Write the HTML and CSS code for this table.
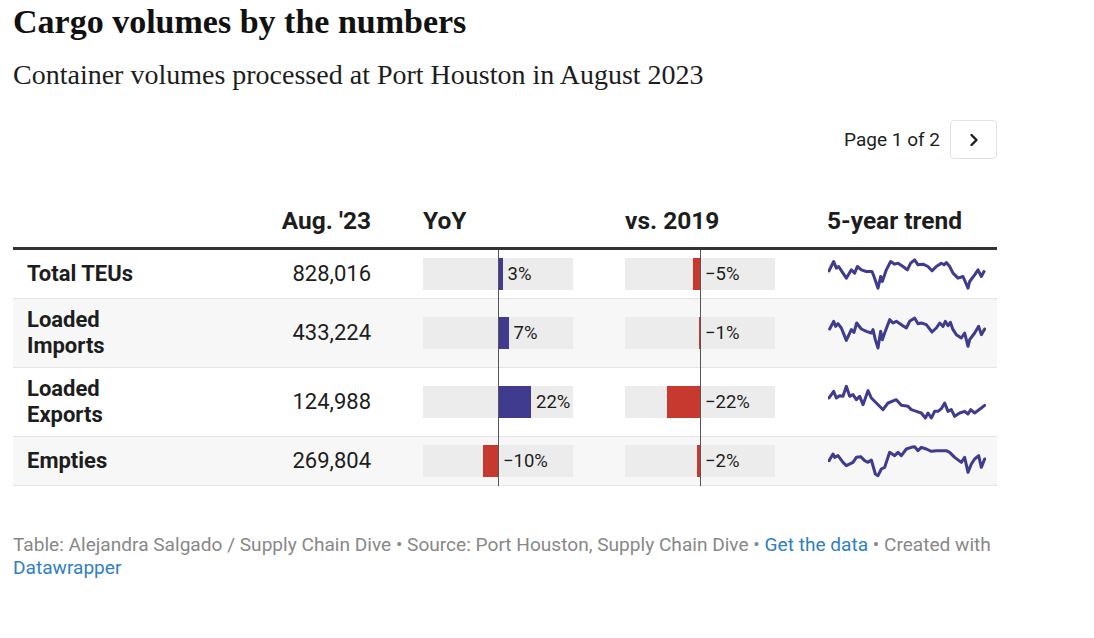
FILE: index.html
```html
<!DOCTYPE html>
<html>
<head>
<meta charset="utf-8">
<link rel="stylesheet" href="styles.css">
</head>
<body>
<div class="chart">
  <h1 class="title">Cargo volumes by the numbers</h1>
  <p class="subtitle">Container volumes processed at Port Houston in August 2023</p>

  <div class="pager">
    <span class="pager-text">Page 1 of 2</span>
    <button class="pager-btn" aria-label="Next page">
      <svg width="14" height="14" viewBox="0 0 14 14"><path d="M4.5 2 L9.5 7 L4.5 12" fill="none" stroke="#1d1d1d" stroke-width="2.4" stroke-linecap="round" stroke-linejoin="round"/></svg>
    </button>
  </div>

  <div class="table">
    <div class="row head">
      <div class="cell"></div>
      <div class="cell num">Aug. '23</div>
      <div class="cell">YoY</div>
      <div class="cell">vs. 2019</div>
      <div class="cell">5-year trend</div>
    </div>

    <div class="row">
      <div class="cell label">Total TEUs</div>
      <div class="cell num">828,016</div>
      <div class="cell barcell"><div class="track"><div class="neg"></div><div class="pos"><div class="bar blue" style="width:4.5px"></div><span class="val">3%</span></div></div></div>
      <div class="cell barcell"><div class="track"><div class="neg"><div class="bar red" style="width:7.5px"></div></div><div class="pos"><span class="val">−5%</span></div></div></div>
      <div class="cell spark">
        <svg width="158" height="40" viewBox="80 187.5 474 120"><polyline vector-effect="non-scaling-stroke" points="83,238 97,210 105,230 112,225 125,245 135,260 150,235 160,245 168,225 180,235 195,240 212,240 218,255 230,290 238,255 243,270 255,235 268,210 280,218 290,215 305,225 318,235 328,215 340,205 350,220 365,218 380,225 392,238 405,225 420,215 428,220 435,213 445,225 455,245 470,260 485,255 500,290 505,270 520,250 530,235 540,255 548,240"/></svg>
      </div>
    </div>

    <div class="row alt">
      <div class="cell label">Loaded Imports</div>
      <div class="cell num">433,224</div>
      <div class="cell barcell"><div class="track"><div class="neg"></div><div class="pos"><div class="bar blue" style="width:10.5px"></div><span class="val">7%</span></div></div></div>
      <div class="cell barcell"><div class="track"><div class="neg"><div class="bar red" style="width:1.5px"></div></div><div class="pos"><span class="val">−1%</span></div></div></div>
      <div class="cell spark">
        <svg width="158" height="40" viewBox="80 40 474 120"><polyline vector-effect="non-scaling-stroke" points="85,88 97,65 103,80 110,72 120,85 135,122 150,90 158,98 166,70 180,88 195,95 210,100 215,90 222,120 230,145 238,95 243,120 250,100 265,60 275,70 285,65 300,75 315,85 325,65 340,55 350,72 360,70 375,75 392,97 405,85 415,70 425,80 432,65 440,78 447,68 455,90 465,105 480,115 490,100 500,140 505,120 520,100 532,80 540,105 550,88"/></svg>
      </div>
    </div>

    <div class="row">
      <div class="cell label">Loaded Exports</div>
      <div class="cell num">124,988</div>
      <div class="cell barcell"><div class="track"><div class="neg"></div><div class="pos"><div class="bar blue" style="width:33px"></div><span class="val">22%</span></div></div></div>
      <div class="cell barcell"><div class="track"><div class="neg"><div class="bar red" style="width:33px"></div></div><div class="pos"><span class="val">−22%</span></div></div></div>
      <div class="cell spark">
        <svg width="158" height="40" viewBox="80 242 474 120"><polyline vector-effect="non-scaling-stroke" points="83,290 97,270 105,290 115,283 125,285 135,255 145,285 155,280 165,295 175,285 185,310 200,268 210,290 225,305 240,320 245,325 260,305 285,295 300,312 320,315 330,325 345,330 360,335 372,350 380,335 390,350 400,330 410,330 420,322 430,305 440,330 450,325 460,345 475,335 490,330 500,338 508,325 520,335 540,320 550,312"/></svg>
      </div>
    </div>

    <div class="row alt">
      <div class="cell label">Empties</div>
      <div class="cell num">269,804</div>
      <div class="cell barcell"><div class="track"><div class="neg"><div class="bar red" style="width:15px"></div></div><div class="pos"><span class="val">−10%</span></div></div></div>
      <div class="cell barcell"><div class="track"><div class="neg"><div class="bar red" style="width:3px"></div></div><div class="pos"><span class="val">−2%</span></div></div></div>
      <div class="cell spark">
        <svg width="158" height="40" viewBox="80 421 474 120"><polyline vector-effect="non-scaling-stroke" points="83,480 95,460 100,470 110,465 125,485 135,495 155,485 165,470 178,468 190,480 200,485 210,478 222,520 230,525 240,505 250,500 265,455 280,465 290,455 300,465 315,445 330,440 340,438 350,450 360,440 375,445 390,452 405,450 420,450 435,450 445,455 460,470 480,485 490,470 500,515 510,490 520,475 532,465 540,500 550,475"/></svg>
      </div>
    </div>
  </div>

  <div class="footer">
    Table: Alejandra Salgado / Supply Chain Dive • Source: Port Houston, Supply Chain Dive • <a href="#">Get the data</a> • Created with <a href="#">Datawrapper</a>
  </div>
</div>
</body>
</html>
```

FILE: styles.css
```css
* { box-sizing: border-box; }

body {
  margin: 0;
  background: #ffffff;
  color: #1d1d1d;
  font-family: Roboto, "Liberation Sans", Arial, sans-serif;
}

.chart {
  width: 997px;
  padding: 2px 0 0 13px;
}

.title {
  margin: 0;
  font-family: "Liberation Serif", "Times New Roman", serif;
  font-weight: 700;
  font-size: 34px;
  line-height: 40px;
  color: #111111;
}

.subtitle {
  margin: 16px 0 0;
  font-family: "Liberation Serif", "Times New Roman", serif;
  font-size: 28px;
  line-height: 34px;
  color: #1d1d1d;
}

.pager {
  display: flex;
  justify-content: flex-end;
  align-items: center;
  gap: 10px;
  margin-top: 28px;
}

.pager-text {
  font-size: 19px;
  color: #1d1d1d;
}

.pager-btn {
  width: 47px;
  height: 39px;
  display: flex;
  align-items: center;
  justify-content: center;
  background: #ffffff;
  border: 1px solid #e2e2e2;
  border-radius: 4px;
  padding: 0;
}

.row {
  display: grid;
  grid-template-columns: 120px 172px 150px 150px 159px;
  column-gap: 52px;
  padding: 0 11px 0 14px;
  border-bottom: 1px solid #e4e4e4;
  align-items: center;
}

.row.alt {
  background: #f7f7f7;
}

.row.head {
  border-bottom: 3px solid #333333;
  padding-top: 48px;
  padding-bottom: 12px;
  align-items: end;
}

.row.head .cell {
  font-weight: 700;
  font-size: 24.5px;
  line-height: 28px;
}

.cell {
  font-size: 22px;
  line-height: 26px;
}

.label {
  font-weight: 700;
  padding: 8px 0;
}

.num {
  text-align: right;
}

.barcell {
  align-self: stretch;
  display: flex;
  align-items: center;
  position: relative;
  padding: 8px 0;
}

.barcell::after {
  content: "";
  position: absolute;
  top: 0;
  bottom: -1px;
  left: 75px;
  width: 1px;
  background: #555555;
}

.track {
  width: 150px;
  height: 32px;
  background: #ececec;
  display: grid;
  grid-template-columns: 75px 75px;
}

.neg {
  display: flex;
  justify-content: flex-end;
}

.pos {
  display: flex;
  align-items: center;
}

.bar {
  height: 32px;
  flex: none;
}

.bar.blue { background: #403b8e; }
.bar.red { background: #c7392f; }

.val {
  margin-left: 5px;
  font-size: 18.5px;
  line-height: 32px;
  color: #1d1d1d;
  white-space: nowrap;
}

.spark {
  display: flex;
  align-items: center;
  padding-left: 1px;
}

.spark polyline {
  fill: none;
  stroke: #3f3b8f;
  stroke-width: 3;
  stroke-linejoin: round;
  stroke-linecap: round;
}

.footer {
  margin-top: 47px;
  font-size: 19.1px;
  line-height: 23px;
  color: #888888;
}

.footer a {
  color: #2f7fc1;
  text-decoration: none;
}
```
